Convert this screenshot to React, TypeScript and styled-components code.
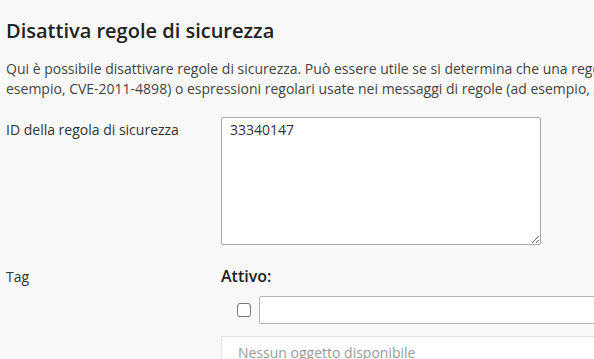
import React from "react";
import styled, { createGlobalStyle } from "styled-components";

const GlobalStyle = createGlobalStyle`
  html, body {
    margin: 0;
    padding: 0;
    background: #f9f9f9;
    overflow: hidden;
  }

  body {
    font-family: "Open Sans", "DejaVu Sans", sans-serif;
    color: #333;
  }
`;

const Page = styled.div`
  width: 1100px;
  padding: 19px 0 40px 6px;
  box-sizing: border-box;
`;

const Title = styled.h2`
  margin: 0;
  font-size: 20px;
  line-height: 24px;
  font-weight: 600;
  color: #222;
`;

const Description = styled.p`
  margin: 16px 0 0;
  font-size: 14px;
  line-height: 20px;
  color: #444;

  span {
    display: block;
    white-space: nowrap;
  }
`;

const FormRow = styled.div<{ $gap: number }>`
  display: grid;
  grid-template-columns: 215px 1fr;
  margin-top: ${(p) => p.$gap}px;
`;

const Label = styled.label<{ $offset: number }>`
  padding-top: ${(p) => p.$offset}px;
  font-size: 14px;
  line-height: 20px;
  color: #333;
`;

const TextArea = styled.textarea`
  display: block;
  width: 320px;
  height: 128px;
  box-sizing: border-box;
  padding: 2px 8px;
  border: 1px solid #a9a9a9;
  border-radius: 2px;
  background: #fff;
  font-family: inherit;
  font-size: 14px;
  line-height: 20px;
  color: #333;
  outline: none;
`;

const Field = styled.div`
  width: 520px;
`;

const GroupTitle = styled.div`
  font-size: 16px;
  line-height: 20px;
  font-weight: 600;
  color: #222;
`;

const InputLine = styled.div`
  display: flex;
  align-items: center;
  gap: 8px;
  margin-top: 10px;
  padding-left: 16px;
`;

const Check = styled.input`
  appearance: none;
  margin: 0;
  width: 14px;
  height: 14px;
  box-sizing: border-box;
  border: 1px solid #777;
  border-radius: 3px;
  background: #fff;
  flex: none;
`;

const TextInput = styled.input`
  flex: 1;
  height: 28px;
  box-sizing: border-box;
  border: 1px solid #b5b5b5;
  border-radius: 2px;
  background: #fff;
  padding: 0 8px;
  font-family: inherit;
  font-size: 14px;
  outline: none;
`;

const EmptyBox = styled.div`
  margin-top: 12px;
  border: 1px solid #e4e4e4;
  background: #fff;
  padding: 6px 16px 10px;
  font-size: 14px;
  line-height: 20px;
  color: #9a9a9a;
`;

export default function App() {
  return (
    <>
      <GlobalStyle />
      <Page>
        <Title>Disattiva regole di sicurezza</Title>
        <Description>
          <span>
            Qui è possibile disattivare regole di sicurezza. Può essere utile se si determina che una regola di sicurezza causa problemi. È possibile specificare ID di regole (ad esempio, 340003), tag (ad
          </span>
          <span>
            esempio, CVE-2011-4898) o espressioni regolari usate nei messaggi di regole (ad esempio, XSS).
          </span>
        </Description>
        <FormRow $gap={18}>
          <Label $offset={3}>ID della regola di sicurezza</Label>
          <TextArea defaultValue="33340147" />
        </FormRow>
        <FormRow $gap={21}>
          <Label $offset={1}>Tag</Label>
          <Field>
            <GroupTitle>Attivo:</GroupTitle>
            <InputLine>
              <Check type="checkbox" />
              <TextInput type="text" />
            </InputLine>
            <EmptyBox>Nessun oggetto disponibile</EmptyBox>
          </Field>
        </FormRow>
      </Page>
    </>
  );
}
